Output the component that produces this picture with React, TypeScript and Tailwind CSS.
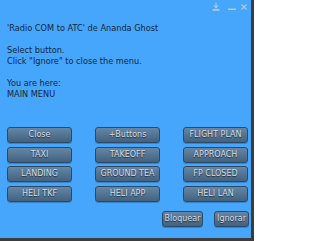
import React from "react";

const buttons = [
  "Close", "+Buttons", "FLIGHT PLAN",
  "TAXI", "TAKEOFF", "APPROACH",
  "LANDING", "GROUND TEA", "FP CLOSED",
  "HELI TKF", "HELI APP", "HELI LAN",
];

function DialogButton({ label, className }: { label: string; className?: string }) {
  return (
    <button
      className={
        "h-[16px] rounded-[3px] border border-[#2c4a66] bg-gradient-to-b from-[#6686a6] to-[#42627f] text-[8px] leading-none text-[#d3dbe3] shadow-[0_1px_0_rgba(0,0,0,0.2)] [text-shadow:0_1px_1px_rgba(0,0,0,0.6)] " +
        (className ?? "")
      }
    >
      {label}
    </button>
  );
}

export default function App() {
  return (
    <div className="w-[254px] h-[241px] bg-[#3c3c3c] overflow-hidden font-['DejaVu_Sans',sans-serif]">
      <div className="w-[251px] h-[238px] bg-[#46a6fc] relative flex flex-col">
        <div className="absolute top-[2px] right-[4px] flex items-center text-[#b4c8dc]">
          <svg width="8" height="10" viewBox="0 0 8 10" className="mr-[8px]">
            <path d="M4 0.5v5M2 3.5l2 2.3L6 3.5" stroke="currentColor" strokeWidth="1.1" fill="none" />
            <rect x="0.5" y="7" width="7" height="1.8" fill="currentColor" />
          </svg>
          <svg width="8" height="10" viewBox="0 0 8 10" className="mr-[5px]">
            <rect x="0" y="6.5" width="8" height="1.5" fill="currentColor" />
          </svg>
          <svg width="6" height="10" viewBox="0 0 6 10">
            <path d="M0.5 2.5l5 5M5.5 2.5l-5 5" stroke="currentColor" strokeWidth="1.2" />
          </svg>
        </div>

        <div className="pl-[7px] pt-[23px] text-[8.2px] leading-[11px] text-[#13263a]">
          <p>'Radio COM to ATC' de Ananda Ghost</p>
          <p className="mt-[11px]">Select button.</p>
          <p>Click "Ignore" to close the menu.</p>
          <p className="mt-[11px]">You are here:</p>
          <p>MAIN MENU</p>
        </div>

        <div className="mt-[27px] ml-[7px] grid grid-cols-[65px_65px_65px] gap-x-[23px] gap-y-[3.7px]">
          {buttons.map((b) => (
            <DialogButton key={b} label={b} />
          ))}
        </div>

        <div className="mt-[9px] flex justify-end gap-[11px] pr-[2px]">
          <DialogButton label="Bloquear" className="w-[41px]" />
          <DialogButton label="Ignorar" className="w-[35px]" />
        </div>
      </div>
    </div>
  );
}
